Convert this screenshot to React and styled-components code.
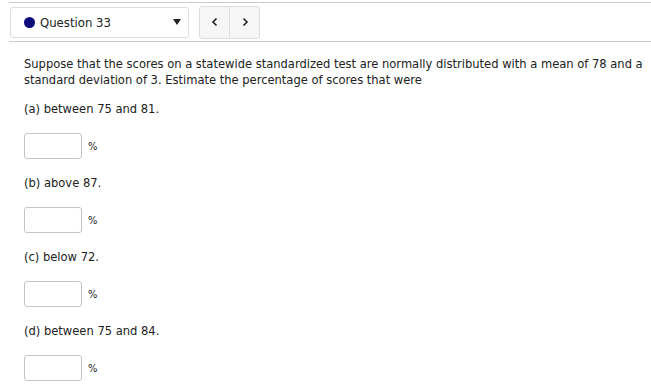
import React from "react";
import styled, { createGlobalStyle } from "styled-components";

const GlobalStyle = createGlobalStyle`
  body {
    margin: 0;
    background: #ffffff;
    font-family: "DejaVu Sans Condensed", "DejaVu Sans", sans-serif;
    color: #222222;
  }
`;

const Page = styled.div`
  width: 651px;
  padding-left: 9px;
  box-sizing: border-box;
`;

const Header = styled.div`
  display: flex;
  align-items: center;
  gap: 10px;
  padding-left: 1px;
  height: 40px;
  margin-top: 2px;
  border-top: 1px solid #cccccc;
  border-bottom: 1px solid #cccccc;
  box-sizing: border-box;
`;

const Picker = styled.div`
  display: flex;
  align-items: center;
  width: 179px;
  height: 31px;
  box-sizing: border-box;
  border: 1px solid #dddddd;
  border-radius: 3px;
  padding: 0 7px 0 13px;
  font-size: 13px;
`;

const Dot = styled.span`
  width: 11px;
  height: 11px;
  border-radius: 50%;
  background: #0b0b7a;
  margin-right: 5px;
`;

const Caret = styled.span`
  margin-left: auto;
  width: 0;
  height: 0;
  border-left: 4px solid transparent;
  border-right: 4px solid transparent;
  border-top: 6px solid #222222;
`;

const NavGroup = styled.div`
  display: flex;
  height: 31px;
  border: 1px solid #dddddd;
  border-radius: 3px;
  background: #f6f6f6;
  overflow: hidden;
`;

const NavButton = styled.div`
  width: 29px;
  display: flex;
  align-items: center;
  justify-content: center;
  color: #333333;
  & + & {
    border-left: 1px solid #dddddd;
  }
`;

const Body = styled.div`
  padding: 14px 0 0 15px;
  font-size: 12.8px;
`;

const Prompt = styled.p`
  margin: 0;
  line-height: 16px;
`;

const Part = styled.div`
  margin-top: 16px;
  &:first-of-type {
    margin-top: 13px;
  }
`;

const PartLabel = styled.div`
  line-height: 16px;
`;

const AnswerRow = styled.div`
  display: flex;
  align-items: center;
  gap: 6px;
  margin-top: 16px;
  height: 26px;
`;

const AnswerBox = styled.div`
  width: 58px;
  height: 26px;
  box-sizing: border-box;
  border: 1px solid #c4c4c4;
  border-radius: 3px;
`;

const Unit = styled.span`
  font-size: 11px;
`;

const Chevron = ({ dir }) => (
  <svg width="8" height="10" viewBox="0 0 8 10">
    <path
      d={dir === "left" ? "M5.5 1.5 L2 5 L5.5 8.5" : "M2.5 1.5 L6 5 L2.5 8.5"}
      fill="none"
      stroke="#222"
      strokeWidth="1.6"
    />
  </svg>
);

const parts = [
  "(a) between 75 and 81.",
  "(b) above 87.",
  "(c) below 72.",
  "(d) between 75 and 84.",
];

export default function App() {
  return (
    <Page>
      <GlobalStyle />
      <Header>
        <Picker>
          <Dot />
          Question 33
          <Caret />
        </Picker>
        <NavGroup>
          <NavButton>
            <Chevron dir="left" />
          </NavButton>
          <NavButton>
            <Chevron dir="right" />
          </NavButton>
        </NavGroup>
      </Header>
      <Body>
        <Prompt>
          Suppose that the scores on a statewide standardized test are normally
          distributed with a mean of 78 and a standard deviation of 3. Estimate
          the percentage of scores that were
        </Prompt>
        {parts.map((p) => (
          <Part key={p}>
            <PartLabel>{p}</PartLabel>
            <AnswerRow>
              <AnswerBox />
              <Unit>%</Unit>
            </AnswerRow>
          </Part>
        ))}
      </Body>
    </Page>
  );
}
